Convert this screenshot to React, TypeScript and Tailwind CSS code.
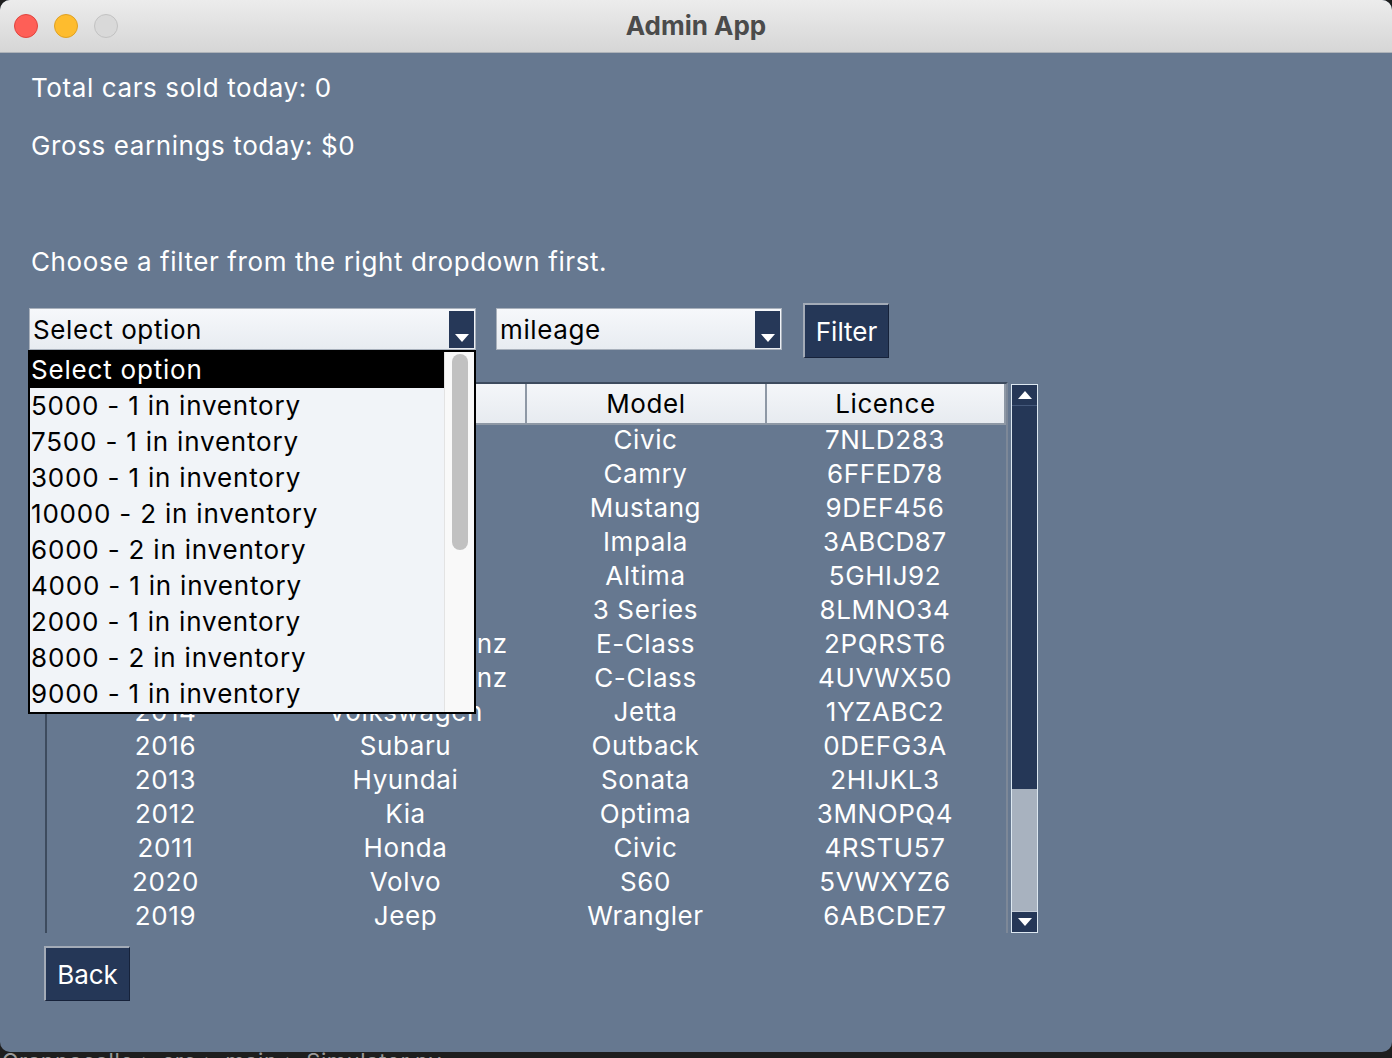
import React from "react";

const options = [
  "Select option",
  "5000 - 1 in inventory",
  "7500 - 1 in inventory",
  "3000 - 1 in inventory",
  "10000 - 2 in inventory",
  "6000 - 2 in inventory",
  "4000 - 1 in inventory",
  "2000 - 1 in inventory",
  "8000 - 2 in inventory",
  "9000 - 1 in inventory",
];

const cars = [
  ["2018", "Honda", "Civic", "7NLD283"],
  ["2019", "Toyota", "Camry", "6FFED78"],
  ["2015", "Ford", "Mustang", "9DEF456"],
  ["2017", "Chevrolet", "Impala", "3ABCD87"],
  ["2020", "Nissan", "Altima", "5GHIJ92"],
  ["2016", "BMW", "3 Series", "8LMNO34"],
  ["2019", "Mercedes-Benz", "E-Class", "2PQRST6"],
  ["2018", "Mercedes-Benz", "C-Class", "4UVWX50"],
  ["2014", "Volkswagen", "Jetta", "1YZABC2"],
  ["2016", "Subaru", "Outback", "0DEFG3A"],
  ["2013", "Hyundai", "Sonata", "2HIJKL3"],
  ["2012", "Kia", "Optima", "3MNOPQ4"],
  ["2011", "Honda", "Civic", "4RSTU57"],
  ["2020", "Volvo", "S60", "5VWXYZ6"],
  ["2019", "Jeep", "Wrangler", "6ABCDE7"],
];

const columns = ["Year", "Make", "Model", "Licence"];

function ArrowBox({ up = false }: { up?: boolean }) {
  return (
    <div className="flex h-[20px] items-center justify-center bg-[#253757]">
      <svg width="14" height="8" viewBox="0 0 14 8">
        <path d={up ? "M0 8 L7 0 L14 8 Z" : "M0 0 L14 0 L7 8 Z"} fill="#ffffff" />
      </svg>
    </div>
  );
}

function Combo({ width, label, children }: { width: string; label: string; children?: React.ReactNode }) {
  return (
    <div className={`relative mt-[5px] flex h-[42px] ${width} items-center border border-[#a9b1bc] bg-gradient-to-b from-[#f6f8fb] to-[#e8ecf1]`}>
      <span className="flex-1 pl-[3px] text-[26px] text-black">{label}</span>
      <div className="mr-[1px] flex h-[37px] w-[25px] items-end justify-center bg-[#263858] pb-[6px]">
        <svg width="14" height="8" viewBox="0 0 14 8">
          <path d="M0 0 L14 0 L7 8 Z" fill="#ffffff" />
        </svg>
      </div>
      {children}
    </div>
  );
}

function NavyButton({ label, className = "" }: { label: string; className?: string }) {
  return (
    <button
      type="button"
      className={`flex h-[55px] w-[86px] items-center justify-center border-t-2 border-l-2 border-r border-b border-t-[#a3abb7] border-l-[#a3abb7] border-r-[#16223a] border-b-[#16223a] bg-[#253757] text-[26px] tracking-normal text-white ${className}`}
    >
      {label}
    </button>
  );
}

export default function App() {
  return (
    <div className="h-[1058px] w-[1392px] overflow-hidden bg-[#1e1e1e] font-['Inter','Noto_Sans',sans-serif] tracking-[0.6px]">
      <div className="flex h-[1052px] flex-col overflow-hidden rounded-[10px] bg-[#667890]">
        {/* title bar */}
        <div className="relative flex h-[53px] shrink-0 items-center justify-center border-b border-[#aeb3b9] bg-gradient-to-b from-[#ececec] to-[#d6d6d6]">
          <div className="absolute left-[14px] top-[14px] flex gap-[16px]">
            <span className="h-[24px] w-[24px] rounded-full border border-[#e0443e] bg-[#fe5f57]" />
            <span className="h-[24px] w-[24px] rounded-full border border-[#dfa123] bg-[#febc2e]" />
            <span className="h-[24px] w-[24px] rounded-full border border-[#c2c2c2] bg-[#d9d9d9]" />
          </div>
          <span className="mt-[-2px] text-[26px] font-bold tracking-normal text-[#4b4b4b]">Admin App</span>
        </div>

        <div className="flex flex-col px-[29px] text-white">
          <p className="ml-[2px] mt-[18px] text-[26px] leading-[34px]">Total cars sold today: 0</p>
          <p className="ml-[2px] mt-[24px] text-[26px] leading-[34px]">Gross earnings today: $0</p>
          <p className="ml-[2px] mt-[82px] text-[26px] leading-[34px]">
            Choose a filter from the right dropdown first.
          </p>

          {/* filter controls */}
          <div className="mt-[24px] flex h-[54px] items-start">
            <Combo width="w-[447px]" label="Select option">
              <div className="absolute left-[-2px] top-[41px] z-10 flex h-[364px] w-[448px] border-2 border-black bg-[#f1f4f8]">
                <div className="w-[414px]">
                  {options.map((opt, i) => (
                    <div
                      key={opt}
                      className={`h-[36px] pl-[1px] text-[26px] leading-[36px] tracking-[0.8px] ${
                        i === 0 ? "bg-black text-white" : "text-black"
                      }`}
                    >
                      {opt}
                    </div>
                  ))}
                </div>
                <div className="flex flex-1 justify-center border-l border-[#e3e3e3] bg-[#f9f9f9] pt-[2px]">
                  <div className="h-[196px] w-[16px] rounded-full bg-[#c1c1c1]" />
                </div>
              </div>
            </Combo>
            <Combo width="ml-[20px] w-[286px]" label="mileage" />
            <NavyButton label="Filter" className="ml-[21px]" />
          </div>

          {/* table */}
          <div className="ml-[16px] mt-[25px] flex">
            <div className="w-[963px] border-l-2 border-r-2 border-t-2 border-l-[#3d4b5e] border-r-[#7d8898] border-t-[#3d4b5e]">
              <div className="mb-[2px] grid h-[37px] grid-cols-[240px_240px_240px_239px]">
                {columns.map((c) => (
                  <div
                    key={c}
                    className="flex items-center justify-center border-b-2 border-r-2 border-[#8e98a5] bg-gradient-to-b from-[#f4f6f9] to-[#e7ebf0] text-[26px] text-black"
                  >
                    {c}
                  </div>
                ))}
              </div>
              {cars.map((row, i) => (
                <div key={i} className="grid h-[34px] grid-cols-[240px_240px_240px_239px] text-[26px] leading-[34px]">
                  {row.map((cell, j) => (
                    <span key={j} className="pr-[3px] text-center">
                      {cell}
                    </span>
                  ))}
                </div>
              ))}
            </div>

            {/* scrollbar */}
            <div className="ml-[3px] mt-[2px] flex h-[549px] w-[27px] flex-col border border-[#dde8f1]">
              <div className="border-b border-[#44587a]">
                <ArrowBox up />
              </div>
              <div className="h-[383px] bg-[#253757]" />
              <div className="flex-1 bg-[#a8b2bf]" />
              <div className="border-t border-[#c6ced8]">
                <ArrowBox />
              </div>
            </div>
          </div>

          <NavyButton label="Back" className="ml-[15px] mt-[13px]" />
        </div>
      </div>
      <div className="h-[6px] overflow-hidden pl-[2px] text-[22px] leading-[18px] text-[#9a9a9a]">
        Grappacalle &gt; src &gt; main &gt; Simulator.py
      </div>
    </div>
  );
}
